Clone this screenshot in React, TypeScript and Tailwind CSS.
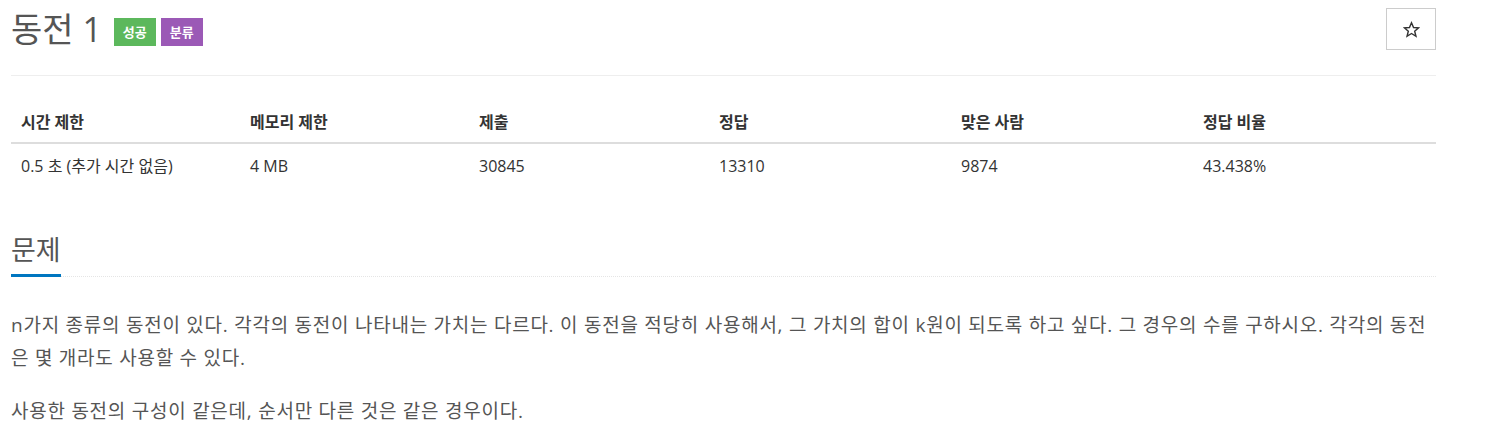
const stats = [
  { label: "시간 제한", value: "0.5 초 (추가 시간 없음)", w: "w-[229px]" },
  { label: "메모리 제한", value: "4 MB", w: "w-[229px]" },
  { label: "제출", value: "30845", w: "w-[240px]" },
  { label: "정답", value: "13310", w: "w-[242px]" },
  { label: "맞은 사람", value: "9874", w: "w-[242px]" },
  { label: "정답 비율", value: "43.438%", w: "" },
];

export default function App() {
  return (
    <div
      className="bg-white w-[1485px] h-[441px] overflow-hidden text-[#333]"
      style={{ fontFamily: '"Open Sans", "Noto Sans CJK KR", sans-serif' }}
    >
      <div className="ml-[11px] w-[1425px]">
        <div className="flex items-start justify-between pt-[8px] pb-[25px] border-b border-[#eee]">
          <div className="flex items-center gap-[12px] h-[42px]">
            <h1 className="text-[34px] leading-[40px] text-[#555] font-normal">동전 1</h1>
            <div className="flex gap-[5px] mt-[6px]">
              <span className="bg-[#5cb85c] text-white text-[13px] font-bold leading-[28px] px-[9px]">성공</span>
              <span className="bg-[#9b59b6] text-white text-[13px] font-bold leading-[28px] px-[9px]">분류</span>
            </div>
          </div>
          <button className="w-[50px] h-[42px] border border-[#ccc] bg-white flex items-center justify-center text-[#333]">
            <svg width="17" height="17" viewBox="0 0 24 24" fill="none" stroke="currentColor" strokeWidth="2" strokeLinejoin="miter">
              <polygon points="12,2.5 14.9,9.2 22,9.6 16.5,14.3 18.3,21.5 12,17.6 5.7,21.5 7.5,14.3 2,9.6 9.1,9.2" />
            </svg>
          </button>
        </div>

        <table className="w-full mt-[26px] text-[16px] border-collapse">
          <thead>
            <tr className="border-b-2 border-[#ddd]">
              {stats.map((s) => (
                <th key={s.label} className={`${s.w} text-left font-bold px-[10px] py-[10px] leading-[20px]`}>
                  {s.label}
                </th>
              ))}
            </tr>
          </thead>
          <tbody>
            <tr>
              {stats.map((s) => (
                <td key={s.label} className="px-[10px] py-[12px] leading-[20px] text-[#333]">
                  {s.value}
                </td>
              ))}
            </tr>
          </tbody>
        </table>

        <section className="mt-[43px]">
          <div className="border-b border-dotted border-[#e5e5e5] relative">
            <h2 className="text-[27px] leading-[38px] text-[#555] font-normal pb-[7px]">문제</h2>
            <div className="absolute left-0 bottom-[-1px] w-[50px] h-[3px] bg-[#0076c0]" />
          </div>
          <div className="mt-[32px] text-[19px] tracking-[0.75px] leading-[33px] text-[#555]">
            <p className="mb-[20px]">
              n가지 종류의 동전이 있다. 각각의 동전이 나타내는 가치는 다르다. 이 동전을 적당히 사용해서, 그 가치의 합이 k원이 되도록 하고 싶다. 그 경우의 수를 구하시오. 각각의 동전은 몇 개라도 사용할 수 있다.
            </p>
            <p>사용한 동전의 구성이 같은데, 순서만 다른 것은 같은 경우이다.</p>
          </div>
        </section>
      </div>
    </div>
  );
}
